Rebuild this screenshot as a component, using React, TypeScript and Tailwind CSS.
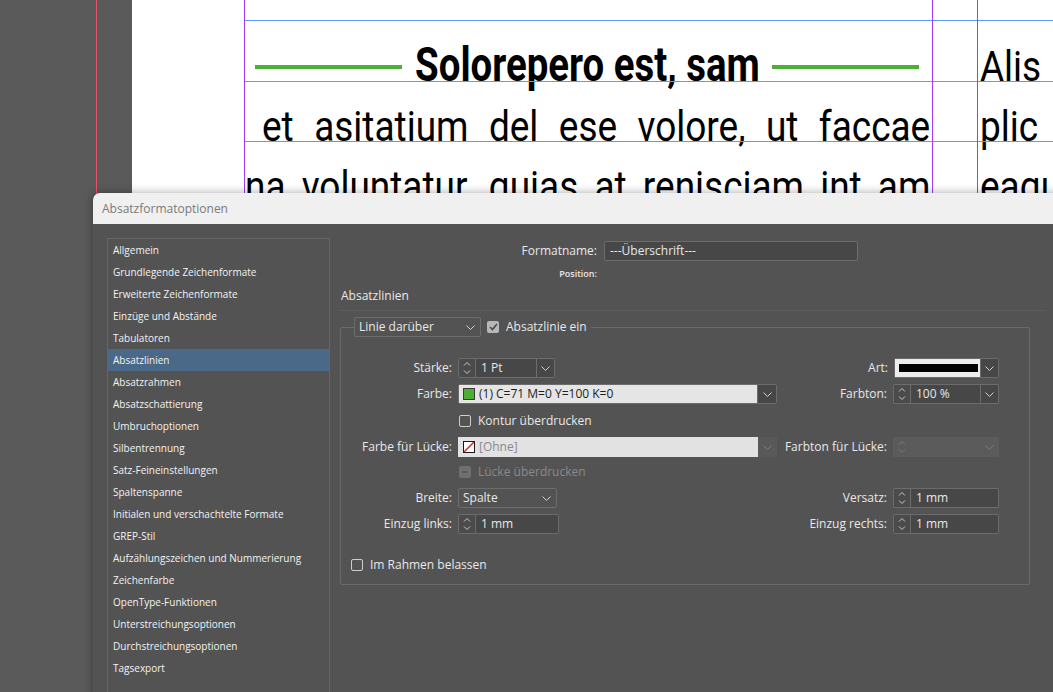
import React from 'react';

const listItems = [
  'Allgemein',
  'Grundlegende Zeichenformate',
  'Erweiterte Zeichenformate',
  'Einzüge und Abstände',
  'Tabulatoren',
  'Absatzlinien',
  'Absatzrahmen',
  'Absatzschattierung',
  'Umbruchoptionen',
  'Silbentrennung',
  'Satz-Feineinstellungen',
  'Spaltenspanne',
  'Initialen und verschachtelte Formate',
  'GREP-Stil',
  'Aufzählungszeichen und Nummerierung',
  'Zeichenfarbe',
  'OpenType-Funktionen',
  'Unterstreichungsoptionen',
  'Durchstreichungsoptionen',
  'Tagsexport',
];

const Chevron = ({ dim }: { dim?: boolean }) => (
  <svg width="9" height="5" viewBox="0 0 9 5" fill="none">
    <path d="M0.5 0.5L4.5 4.5L8.5 0.5" stroke={dim ? '#7a7a7a' : '#d0d0d0'} strokeWidth="1" />
  </svg>
);

const Spin = ({ dim }: { dim?: boolean }) => (
  <svg width="8" height="18" viewBox="0 0 8 18" fill="none" stroke={dim ? '#7a7a7a' : '#c8c8c8'} strokeWidth="1">
    <path d="M1 6.5L4 3.5L7 6.5" />
    <path d="M1 11.5L4 14.5L7 11.5" />
  </svg>
);

const Checkbox = ({ state }: { state: 'off' | 'on' | 'dim' }) => {
  if (state === 'on') {
    return (
      <div className="flex h-[12px] w-[12px] shrink-0 items-center justify-center rounded-[2px] bg-[#b8b8b8]">
        <svg width="9" height="8" viewBox="0 0 9 8" fill="none">
          <path d="M1 4L3.5 6.5L8 1" stroke="#4a4a4a" strokeWidth="1.6" />
        </svg>
      </div>
    );
  }
  if (state === 'dim') {
    return (
      <div className="flex h-[12px] w-[12px] shrink-0 items-center justify-center rounded-[2px] bg-[#707070]">
        <div className="h-[2px] w-[6px] bg-[#5a5a5a]" />
      </div>
    );
  }
  return <div className="h-[12px] w-[12px] shrink-0 rounded-[2px] border border-[#cdcdcd]" />;
};

const SpinField = ({ value, width, dropdown }: { value: string; width: string; dropdown?: boolean }) => (
  <div className={`flex h-[20px] rounded-[2px] border border-[#6c6c6c] bg-[#474747] ${width}`}>
    <div className="flex w-[17px] items-center justify-center border-r border-[#6c6c6c] bg-[#4b4b4b]">
      <Spin />
    </div>
    <div className="flex flex-1 items-center pl-[5px]">{value}</div>
    {dropdown && (
      <div className="flex w-[18px] items-center justify-center border-l border-[#6c6c6c]">
        <Chevron />
      </div>
    )}
  </div>
);

const Select = ({ value, width }: { value: string; width: string }) => (
  <div className={`flex h-[20px] items-center justify-between rounded-[2px] border border-[#6c6c6c] pl-[4px] pr-[5px] ${width}`}>
    <span>{value}</span>
    <Chevron />
  </div>
);

const Row = ({
  label,
  field,
  rLabel,
  rField,
  className,
}: {
  label: string;
  field: React.ReactNode;
  rLabel?: string;
  rField?: React.ReactNode;
  className: string;
}) => (
  <div className={`flex h-[20px] items-center ${className}`}>
    <div className="w-[111px] shrink-0 text-right">{label}</div>
    <div className="ml-[6px]">{field}</div>
    {rLabel && (
      <div className="ml-auto mr-[30px] flex items-center">
        <span>{rLabel}</span>
        <div className="ml-[6px]">{rField}</div>
      </div>
    )}
  </div>
);

const Document = () => (
  <div className="flex h-full">
    <div className="relative w-[132px] shrink-0">
      <div className="absolute left-[96px] top-0 h-full w-px bg-[#e8506a]" />
    </div>
    <div className="relative flex-1 overflow-hidden bg-white font-['Roboto',sans-serif] text-black">
      <div className="flex pl-[112px]">
        <div className="w-[688px] shrink-0">
          <div className="mt-[35px] flex h-[60px] items-center">
            <div className="ml-[11px] mt-[4px] h-[4px] w-[147px] shrink-0 bg-[#4eaf35]" />
            <div className="flex w-[370px] shrink-0 justify-center">
              <span className="inline-block shrink-0 scale-x-[0.8] whitespace-nowrap text-[48px] font-bold leading-[60px]">
                Solorepero est, sam
              </span>
            </div>
            <div className="mt-[4px] h-[4px] w-[147px] shrink-0 bg-[#4eaf35]" />
          </div>
          <div className="mt-[1px] text-[43px] leading-[60px]">
            <div className="h-[60px] pl-[18px]">
              <div className="w-[777px] origin-left scale-x-[0.86] text-justify [text-align-last:justify]">
                et asitatium del ese volore, ut faccae
              </div>
            </div>
            <div className="h-[60px] pl-[1px]">
              <div className="w-[797px] origin-left scale-x-[0.86] text-justify [text-align-last:justify]">
                na voluntatur, quias at renisciam int am
              </div>
            </div>
          </div>
        </div>
        <div className="ml-[48px] shrink-0 origin-left scale-x-[0.86] whitespace-nowrap pt-[36px] text-[43px] leading-[60px]">
          <div>Alis</div>
          <div>plic</div>
          <div>eaqu</div>
        </div>
      </div>
      {/* Hilfslinien */}
      <div className="absolute left-[112px] right-0 top-[20px] h-px bg-[#5b9bff]" />
      <div className="absolute left-[112px] right-0 top-[81px] h-px bg-[#5b9bff]" />
      <div className="absolute left-[112px] right-0 top-[141px] h-px bg-[#5b9bff]" />
      <div className="absolute left-[112px] top-0 h-full w-px bg-[#a33cf6]" />
      <div className="absolute left-[800px] top-0 h-full w-px bg-[#a33cf6]" />
      <div className="absolute left-[845px] top-0 h-full w-px bg-[#a33cf6]" />
    </div>
  </div>
);

const Dialog = () => (
  <div className="absolute left-[93px] top-[193px] h-[520px] w-[980px] overflow-hidden rounded-tl-[7px] bg-[#535353] font-['Open_Sans',sans-serif] text-[12px] text-[#e8e8e8] shadow-[0_0_10px_rgba(0,0,0,0.35)]">
    <div className="flex h-[31px] items-center bg-[#f0f0f0] pl-[9px] text-[12px] text-[#7a7a7a]">
      Absatzformatoptionen
    </div>
    <div className="flex">
      <div className="ml-[14px] mt-[14px] h-[470px] w-[223px] shrink-0 border border-[#666666]">
        {listItems.map((item) => (
          <div
            key={item}
            className={`flex h-[22px] items-center pl-[5px] text-[10px] text-[#f2f2f2] ${
              item === 'Absatzlinien' ? 'bg-[#4a6888]' : ''
            }`}
          >
            {item}
          </div>
        ))}
      </div>

      <div className="w-[715px] shrink-0 pl-[10px]">
        <div className="mt-[17px] flex h-[20px] items-center">
          <div className="w-[257px] text-right">Formatname:</div>
          <div className="ml-[7px] flex h-[20px] w-[254px] items-center rounded-[2px] border border-[#6c6c6c] bg-[#474747] pl-[5px]">
            ---Überschrift---
          </div>
        </div>
        <div className="mt-[7px] h-[12px] w-[257px] text-right text-[9px] font-semibold leading-[12px]">Position:</div>
        <div className="mt-[8px] h-[16px] pl-[1px] leading-[16px]">Absatzlinien</div>
        <div className="mt-[6px] h-px bg-[#5e5e5e]" />

        <fieldset className="mt-[6px] w-[690px] rounded-[2px] border border-[#6a6a6a] pb-[9px]">
          <legend className="ml-[13px] pr-[4px]">
            <div className="flex items-center">
              <Select value="Linie darüber" width="w-[127px]" />
              <div className="ml-[6px]">
                <Checkbox state="on" />
              </div>
              <span className="ml-[7px]">Absatzlinie ein</span>
            </div>
          </legend>

          <Row
            className="mt-[21px]"
            label="Stärke:"
            field={<SpinField value="1 Pt" width="w-[97px]" dropdown />}
            rLabel="Art:"
            rField={
              <div className="flex h-[20px] w-[105px] rounded-[2px] border border-[#6c6c6c]">
                <div className="flex flex-1 items-center bg-[#ececec] pl-[4px]">
                  <div className="h-[8px] w-[79px] bg-black" />
                </div>
                <div className="flex w-[18px] items-center justify-center border-l border-[#6c6c6c] bg-[#474747]">
                  <Chevron />
                </div>
              </div>
            }
          />
          <Row
            className="mt-[6px]"
            label="Farbe:"
            field={
              <div className="flex h-[20px] w-[319px] rounded-[2px] border border-[#6c6c6c]">
                <div className="flex flex-1 items-center bg-[#e5e5e5] pl-[4px] text-[#1e1e1e]">
                  <div className="h-[12px] w-[12px] border border-[#3a3a3a] bg-[#4caf32]" />
                  <span className="ml-[4px]">(1) C=71 M=0 Y=100 K=0</span>
                </div>
                <div className="flex w-[19px] items-center justify-center border-l border-[#6c6c6c] bg-[#474747]">
                  <Chevron />
                </div>
              </div>
            }
            rLabel="Farbton:"
            rField={<SpinField value="100 %" width="w-[106px]" dropdown />}
          />
          <div className="mt-[7px] flex h-[20px] items-center pl-[118px]">
            <Checkbox state="off" />
            <span className="ml-[7px]">Kontur überdrucken</span>
          </div>
          <Row
            className="mt-[6px]"
            label="Farbe für Lücke:"
            field={
              <div className="flex h-[20px] w-[319px]">
                <div className="flex flex-1 items-center bg-[#e2e2e2] pl-[5px] text-[#8a8a8a]">
                  <svg width="12" height="12" viewBox="0 0 12 12">
                    <rect x="0.5" y="0.5" width="11" height="11" fill="#fff" stroke="#1a1a1a" />
                    <path d="M1 11L11 1" stroke="#e0201c" strokeWidth="1.5" />
                  </svg>
                  <span className="ml-[4px]">[Ohne]</span>
                </div>
                <div className="flex w-[19px] items-center justify-center bg-[#595959]">
                  <Chevron dim />
                </div>
              </div>
            }
            rLabel="Farbton für Lücke:"
            rField={
              <div className="flex h-[20px] w-[106px] items-center justify-between bg-[#5b5b5b] pl-[5px] pr-[5px]">
                <Spin dim />
                <Chevron dim />
              </div>
            }
          />
          <div className="mt-[5px] flex h-[20px] items-center pl-[118px] text-[#8a8a8a]">
            <Checkbox state="dim" />
            <span className="ml-[7px]">Lücke überdrucken</span>
          </div>
          <Row
            className="mt-[6px]"
            label="Breite:"
            field={<Select value="Spalte" width="w-[99px]" />}
            rLabel="Versatz:"
            rField={<SpinField value="1 mm" width="w-[106px]" />}
          />
          <Row
            className="mt-[6px]"
            label="Einzug links:"
            field={<SpinField value="1 mm" width="w-[101px]" />}
            rLabel="Einzug rechts:"
            rField={<SpinField value="1 mm" width="w-[106px]" />}
          />
          <div className="mt-[21px] flex h-[20px] items-center pl-[10px]">
            <Checkbox state="off" />
            <span className="ml-[7px]">Im Rahmen belassen</span>
          </div>
        </fieldset>
      </div>
    </div>
  </div>
);

export default function App() {
  return (
    <div className="relative h-[692px] w-[1053px] overflow-hidden bg-[#5a5a5a]">
      <Document />
      <Dialog />
    </div>
  );
}
